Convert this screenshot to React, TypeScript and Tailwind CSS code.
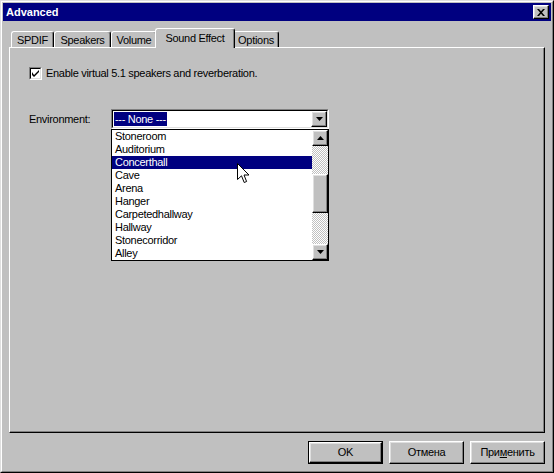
import React from "react";

const ITEMS = [
	"Stoneroom",
	"Auditorium",
	"Concerthall",
	"Cave",
	"Arena",
	"Hanger",
	"Carpetedhallway",
	"Hallway",
	"Stonecorridor",
	"Alley",
];

const TABS = [
	{ label: "SPDIF", w: "w-[43px]" },
	{ label: "Speakers", w: "w-[57px]" },
	{ label: "Volume", w: "w-[46px]" },
	{ label: "Sound Effect", w: "w-[80px]", active: true },
	{ label: "Options", w: "w-[46px]" },
];

const raised =
	"border border-t-white border-l-white border-r-black border-b-black shadow-[inset_-1px_-1px_0_#808080,inset_1px_1px_0_#dfdfdf]";

const Arrow = ({ up }: { up?: boolean }) => (
	<svg width="7" height="4" viewBox="0 0 7 4" aria-hidden="true">
		{up ? <path d="M3.5 0 L7 4 L0 4 Z" fill="#000" /> : <path d="M0 0 L7 0 L3.5 4 Z" fill="#000" />}
	</svg>
);

const Button = ({ children, isDefault }: { children: React.ReactNode; isDefault?: boolean }) => (
	<div className={isDefault ? "w-[75px] h-[23px] border border-black" : "w-[75px] h-[23px]"}>
		<div className={`h-full flex items-center justify-center bg-[#c0c0c0] ${raised}`}>{children}</div>
	</div>
);

export default function App() {
	return (
		<div className="relative w-[554px] h-[473px] bg-[#c0c0c0] border border-t-[#dfdfdf] border-l-[#dfdfdf] border-r-black border-b-black font-['Liberation_Sans',Arial,sans-serif] text-[11px] leading-none tracking-[-0.3px] text-black select-none">
			<div className="h-full flex flex-col border border-t-white border-l-white border-r-[#808080] border-b-[#808080] p-px">
				{/* title bar */}
				<div className="h-[18px] bg-[#000080] flex items-center justify-between pl-[3px] pr-[2px]">
					<span className="text-white font-bold text-[11px] tracking-normal">Advanced</span>
					<div className={`w-[16px] h-[14px] bg-[#c0c0c0] flex items-center justify-center ${raised}`}>
						<svg width="8" height="7" viewBox="0 0 8 7" aria-hidden="true">
							<path d="M0 0 L2 0 L4 2.2 L6 0 L8 0 L5 3.5 L8 7 L6 7 L4 4.8 L2 7 L0 7 L3 3.5 Z" fill="#000" />
						</svg>
					</div>
				</div>

				<div className="flex-1 flex flex-col px-[6px] pt-[7px]">
					{/* tabs */}
					<div className="h-[19px] flex items-end pl-[2px]">
						{TABS.map((t) =>
							t.active ? (
								<div
									key={t.label}
									className={`${t.w} relative z-10 -mx-[2px] -mb-px h-[20px] bg-[#c0c0c0] border-l border-t border-r border-l-white border-t-white border-r-black rounded-t-[3px] shadow-[inset_-1px_0_0_#808080] flex items-start justify-center pt-[4px]`}
								>
									{t.label}
								</div>
							) : (
								<div
									key={t.label}
									className={`${t.w} h-[16px] bg-[#c0c0c0] border-l border-t border-r border-l-white border-t-white border-r-black rounded-t-[3px] shadow-[inset_-1px_0_0_#808080] flex items-center justify-center pt-px`}
								>
									{t.label}
								</div>
							),
						)}
					</div>

					{/* panel */}
					<div className="h-[386px] border border-t-white border-l-white border-r-black border-b-black shadow-[inset_-1px_-1px_0_#808080] pl-[19px] pt-[19px]">
						<div className="flex items-center gap-[4px]">
							<div className="w-[13px] h-[13px] border border-t-[#808080] border-l-[#808080] border-r-white border-b-white">
								<div className="h-full bg-white border border-t-black border-l-black border-r-[#dfdfdf] border-b-[#dfdfdf] flex items-center justify-center">
									<svg width="7" height="7" viewBox="0 0 7 7" aria-hidden="true">
										<path d="M0 2 L0 5 L2 7 L7 2 L7 0 L2 5 Z" fill="#000" />
									</svg>
								</div>
							</div>
							<span>Enable virtual 5.1 speakers and reverberation.</span>
						</div>

						<div className="flex items-center mt-[29px]">
							<span className="w-[82px]">Environment:</span>
							<div className="relative w-[218px] h-[20px] border border-t-[#808080] border-l-[#808080] border-r-white border-b-white">
								<div className="h-full bg-white border border-t-black border-l-black border-r-[#dfdfdf] border-b-[#dfdfdf] flex items-center justify-between pl-px">
									<span className="bg-[#000080] text-white h-[14px] px-px flex items-center">--- None ---</span>
									<div className={`w-[16px] h-full bg-[#c0c0c0] flex items-center justify-center ${raised}`}>
										<Arrow />
									</div>
								</div>

								{/* dropdown list */}
								<div className="absolute left-[-1px] top-[19px] z-20 w-[218px] h-[132px] bg-white border border-black flex">
									<div className="flex-1 flex flex-col">
										{ITEMS.map((it) => (
											<div
												key={it}
												className={
													it === "Concerthall"
														? "h-[13px] pl-[3px] flex items-center bg-[#000080] text-white"
														: "h-[13px] pl-[3px] flex items-center"
												}
											>
												{it}
											</div>
										))}
									</div>
									<div className="w-[16px] flex flex-col">
										<div className={`h-[16px] bg-[#c0c0c0] flex items-center justify-center ${raised}`}>
											<Arrow up />
										</div>
										<div className="h-[28px] bg-[repeating-conic-gradient(#c0c0c0_0%_25%,#ffffff_0%_50%)] bg-[length:2px_2px]" />
										<div className={`h-[39px] bg-[#c0c0c0] ${raised}`} />
										<div className="h-[31px] bg-[repeating-conic-gradient(#c0c0c0_0%_25%,#ffffff_0%_50%)] bg-[length:2px_2px]" />
										<div className={`h-[16px] bg-[#c0c0c0] flex items-center justify-center ${raised}`}>
											<Arrow />
										</div>
									</div>
								</div>
							</div>
						</div>
					</div>

					{/* buttons */}
					<div className="flex justify-end gap-[6px] mt-[8px]">
						<Button isDefault>OK</Button>
						<Button>Отмена</Button>
						<Button>
							<span>
								При<u>м</u>енить
							</span>
						</Button>
					</div>
				</div>
			</div>

			{/* mouse cursor */}
			<svg className="absolute left-[236px] top-[162px] z-30" width="13" height="21" viewBox="0 0 13 21" aria-hidden="true">
				<path d="M0.5 0.5 L0.5 16.5 L4.5 12.8 L7.2 19.5 L9.6 18.5 L7 12 L12 12 Z" fill="#fff" stroke="#000" strokeWidth="1" />
			</svg>
		</div>
	);
}
